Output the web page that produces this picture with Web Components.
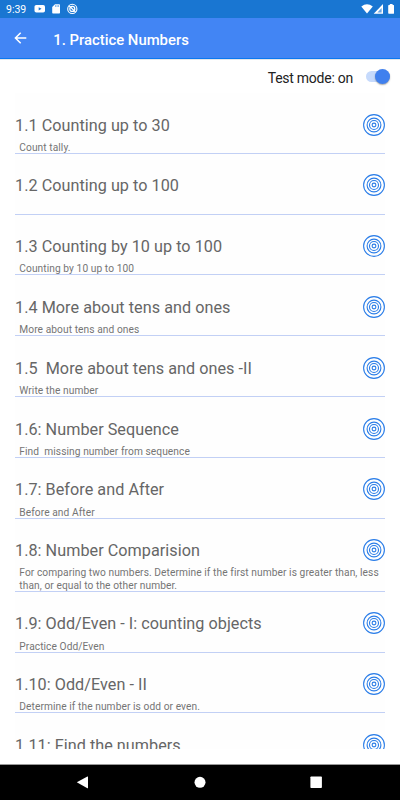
<!DOCTYPE html>
<html lang="en">
<head>
<meta charset="utf-8">
<title>Practice Numbers</title>
<style>
html, body { margin: 0; height: 100%; }
body { font-family: Roboto, "Liberation Sans", sans-serif; background: #fff; overflow: hidden; }
</style>
</head>
<body>
<practice-screen></practice-screen>
<script>
class BaseElement extends HTMLElement {
  constructor() {
    super();
    this.attachShadow({ mode: 'open' });
  }
  connectedCallback() { this.shadowRoot.innerHTML = this.render(); }
}

customElements.define('status-bar', class extends BaseElement {
  render() {
    return `<style>
      :host { display: flex; box-sizing: border-box; height: 18px; flex: none; background: #1976d2; color: #fff; align-items: center; padding: 0 6px 0 6px; }
      .time { font-size: 10.5px; line-height: 18px; padding-top: 1px; width: 28px; white-space: nowrap; }
      svg { display: block; flex: none; }
      .gap { flex: 1; }
    </style>
    <span class="time">9:39</span>
    <svg width="48" height="18" viewBox="34 0 48 18" fill="#fff">
      <rect x="34.5" y="5" width="10.5" height="7.6" rx="1.8"/>
      <path d="M38.7 7.2v3.3l2.8-1.65z" fill="#1976d2"/>
      <path d="M55 4.2h4.2q.8 0 .8.8v7.8q0 .8-.8.8H53q-.8 0-.8-.8V7z"/>
      <path d="M55.6 5.2v1.7M57.1 5.2v1.7M58.6 5.2v1.7" stroke="#1976d2" stroke-width=".6"/>
      <circle cx="72.3" cy="8.9" r="4.6" fill="none" stroke="#fff" stroke-width="1.1"/>
      <circle cx="72.3" cy="8.9" r="2.5" fill="none" stroke="#fff" stroke-width="1.2"/>
      <path d="M69 5.8l6.5 6.2" stroke="#fff" stroke-width="1.2"/>
    </svg>
    <span class="gap"></span>
    <svg width="34" height="18" viewBox="360 0 34 18" fill="#fff">
      <path d="M361.3 6.6Q367 2 372.8 6.6L367 13.6z"/>
      <path d="M383 4v9.7h-9.3z"/>
      <path d="M381.6 8v4.4h-4.2z" fill="#1976d2" opacity=".65"/>
      <path d="M389.8 4h2.8v1h.9q.7 0 .7.7v7.3q0 .7-.7.7h-4.6q-.7 0-.7-.7V5.7q0-.7.7-.7h.9z"/>
    </svg>`;
  }
});

customElements.define('app-bar', class extends BaseElement {
  render() {
    return `<style>
      :host { display: flex; box-sizing: border-box; height: 41px; flex: none; background: #4285f4; color: #fff; align-items: center; padding: 0 14px; border-bottom: 1px solid #0b78f0; box-shadow: 0 1px 0 #e4e6ea; }
      svg { display: block; margin: 0 26.3px 0 0; }
      h1 { margin: 3px 0 0; font-size: 14.85px; font-weight: 500; line-height: 20px; white-space: nowrap; }
    </style>
    <svg width="13" height="13" viewBox="0 0 13 13" fill="none" stroke="#fff" stroke-width="1.5"><path d="M12.3 6H1.5M6.7.8L1.4 6l5.3 5.3"/></svg>
    <h1><slot></slot></h1>`;
  }
});

customElements.define('toggle-switch', class extends BaseElement {
  render() {
    return `<style>
      :host { display: flex; width: 24px; height: 11px; border-radius: 6px; background: #c6dafc; align-items: center; justify-content: flex-end; }
      i { width: 15px; height: 15px; flex: none; border-radius: 50%; background: #4080ee; box-shadow: 0 1px 1.5px rgba(0,0,0,.35); }
    </style><i></i>`;
  }
});

customElements.define('mode-row', class extends BaseElement {
  render() {
    return `<style>
      :host { display: flex; box-sizing: border-box; height: 34px; flex: none; align-items: center; justify-content: flex-end; padding: 1px 10px 0 0; gap: 13px; color: #222; font-size: 14px; letter-spacing: -.25px; line-height: 20px; }
      span { padding-top: 2px; }
    </style><span><slot></slot></span><toggle-switch></toggle-switch>`;
  }
});

customElements.define('target-icon', class extends BaseElement {
  render() {
    return `<style>:host { display: block; width: 22px; height: 22px; } svg { display: block; }</style>
    <svg width="22" height="22" viewBox="0 0 22 22" fill="none" stroke="#2a7de8" stroke-width="1.1">
      <circle cx="11" cy="11" r="10.4"/><circle cx="11" cy="11" r="6.9"/><circle cx="11" cy="11" r="4.5"/><circle cx="11" cy="11" r="1.9"/>
    </svg>`;
  }
});

customElements.define('lesson-item', class extends BaseElement {
  render() {
    return `<style>
      :host { display: block; flex: none; border-bottom: 1px solid #c2d0f5; }
      .head { display: flex; justify-content: space-between; padding-top: 20.6px; height: 28.2px; }
      .title { font-size: 16.2px; letter-spacing: .04px; line-height: 22px; padding-top: 1px; color: #666; white-space: pre; }
      .desc { min-height: 12.4px; margin-bottom: -1.4px; padding: 0 4px 0 4.3px; font-size: 10.2px; letter-spacing: .075px; line-height: 12.4px; color: #757575; white-space: pre-wrap; }
    </style>
    <div class="head"><span class="title"><slot></slot></span><target-icon></target-icon></div>
    <div class="desc"><slot name="desc"></slot></div>`;
  }
});

customElements.define('lesson-list', class extends BaseElement {
  render() {
    return `<style>
      :host { display: flex; flex-direction: column; box-sizing: border-box; height: 656px; flex: none; margin: 0 15px; overflow: hidden; background: #fefefe; }
    </style><slot></slot>`;
  }
});

customElements.define('nav-bar', class extends BaseElement {
  render() {
    return `<style>
      :host { display: flex; box-sizing: border-box; height: 36px; margin-top: auto; background: #000; border-top: 1px solid #999; align-items: center; justify-content: center; }
      svg { display: block; }
    </style>
    <svg width="400" height="35" viewBox="0 765 400 35" fill="#fff">
      <path d="M76.8 782.3L87.4 776.5Q88 776.2 88 777v10.7q0 .8-.6.5z"/>
      <circle cx="200" cy="782.3" r="5.5"/>
      <rect x="310.4" y="776.5" width="11.5" height="11.5" rx=".8"/>
    </svg>`;
  }
});

customElements.define('practice-screen', class extends BaseElement {
  render() {
    const lessons = [
      ['1.1 Counting up to 30', 'Count tally.'],
      ['1.2 Counting up to 100', ''],
      ['1.3 Counting by 10 up to 100', 'Counting by 10 up to 100'],
      ['1.4 More about tens and ones', 'More about tens and ones'],
      ['1.5  More about tens and ones -II', 'Write the number'],
      ['1.6: Number Sequence', 'Find  missing number from sequence'],
      ['1.7: Before and After', 'Before and After'],
      ['1.8: Number Comparision', 'For comparing two numbers. Determine if the first number is greater than, less than, or equal to the other number.'],
      ['1.9: Odd/Even - I: counting objects', 'Practice Odd/Even'],
      ['1.10: Odd/Even - II', 'Determine if the number is odd or even.'],
      ['1.11: Find the numbers', '']
    ];
    const items = lessons.map(([t, d]) => `<lesson-item>${t}<span slot="desc">${d}</span></lesson-item>`).join('');
    return `<style>
      :host { display: flex; flex-direction: column; width: 400px; height: 800px; background: #fff; overflow: hidden; }
    </style>
    <status-bar></status-bar>
    <app-bar>1. Practice Numbers</app-bar>
    <mode-row>Test mode: on</mode-row>
    <lesson-list>${items}</lesson-list>
    <nav-bar></nav-bar>`;
  }
});
</script>
</body>
</html>
